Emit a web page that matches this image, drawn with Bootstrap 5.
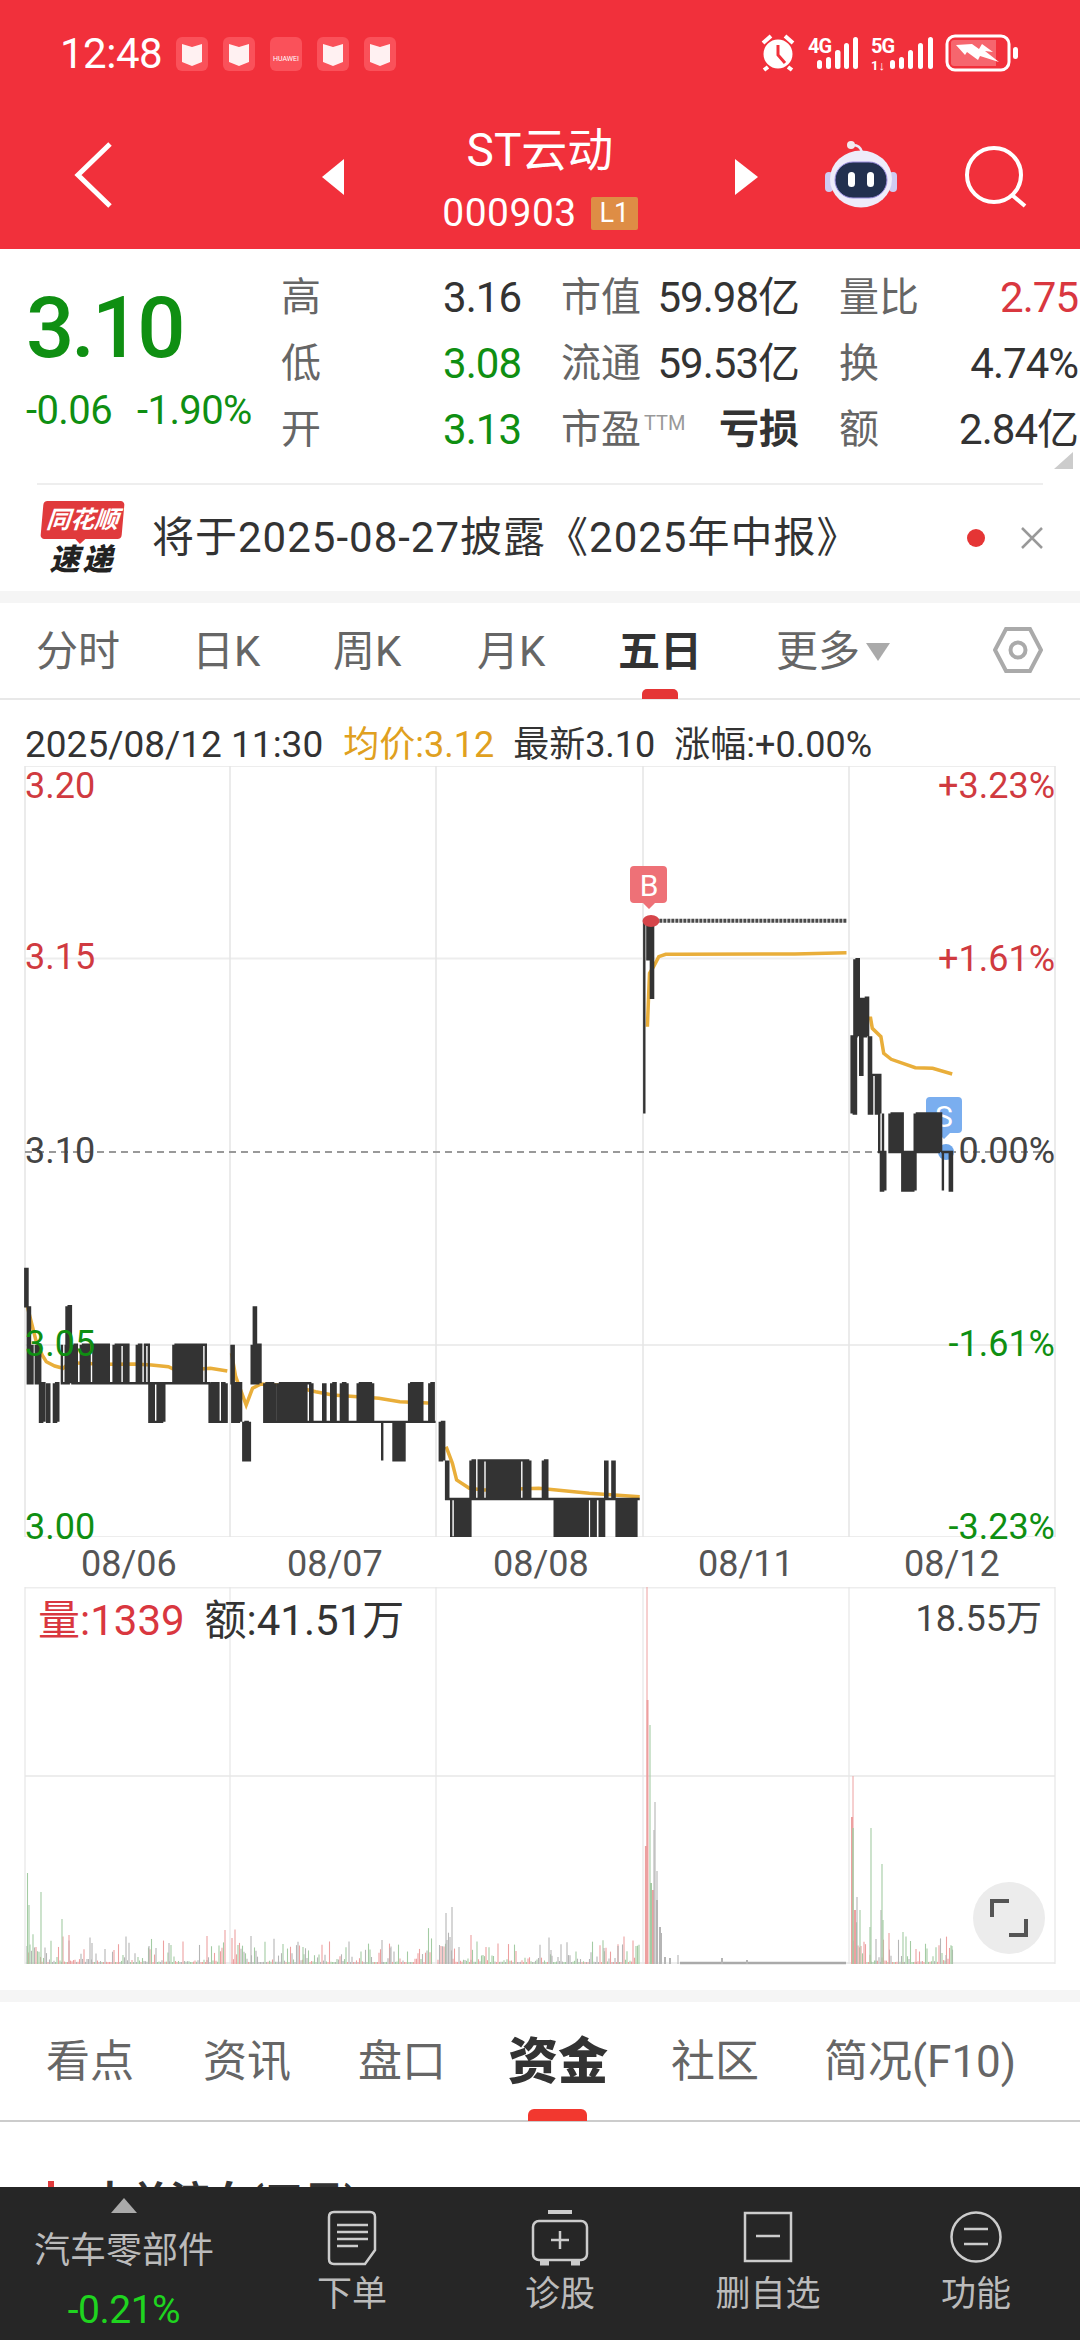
<!DOCTYPE html>
<html lang="zh">
<head>
  <meta charset="UTF-8">
  <title>ST云动</title>
  <link href="https://cdn.jsdelivr.net/npm/bootstrap@5.3.0/dist/css/bootstrap.min.css" rel="stylesheet">
  <style>
    html, body { width: 1080px; height: 2340px; overflow: hidden; }
    body { font-family: Roboto, "Noto Sans CJK SC", sans-serif; color: #333; background: #fff; position: relative; }
    svg { display: block; }

    .top-head { background: #f1303b; height: 249px; color: #fff; }
    .status-row { height: 108px; padding: 0 0 0 60px; }
    .clock { font-size: 42px; line-height: 1; width: 116px; letter-spacing: -.5px; }
    .noti { width: 32px; height: 34px; border-radius: 6px; background: #fa515a; margin-right: 15px; font-size: 7px; line-height: 1; }
    .nav-row { height: 141px; }
    .stock-name { font-size: 46px; line-height: 56px; margin-top: 14px; margin-bottom: 12px; }
    .stock-code { font-size: 39px; line-height: 46px; letter-spacing: .5px; }
    .lvl { background: #de8d45; font-size: 27px; line-height: 33px; width: 47px; text-align: center; border-radius: 2px; margin-left: 14px; }
    .name-box { width: 300px; position: absolute; left: 390px; top: 108px; }

    .quote { height: 234px; }
    .last-box { width: 281px; padding: 43px 0 0 26px; color: #0f8f12; }
    .last-price { font-size: 85px; line-height: 72px; letter-spacing: -3px; font-weight: 500; }
    .last-chg { font-size: 40px; line-height: 44px; margin-top: 25px; letter-spacing: -.6px; white-space: nowrap; }
    .last-chg span + span { margin-left: 25px; }
    .stat-grid { display: grid; grid-template-columns: 240px 238px 239px; column-gap: 40px; grid-auto-rows: 66px; padding-top: 16px; font-size: 40px; line-height: 66px; }
    .stat-grid > div { display: flex; justify-content: space-between; white-space: nowrap; }
    .num { font-size: 42px; letter-spacing: -1px; }
    .lbl { color: #666; }
    .val { color: #333; }
    .fall { color: #0f8f12; }
    .rise { color: #d9373f; }
    .ttm { font-size: 20px; line-height: 1; color: #999; vertical-align: 13px; margin-left: 3px; letter-spacing: 0; }
    .corner { width: 0; height: 0; border-left: 19px solid transparent; border-bottom: 17px solid #ccc; position: absolute; left: 1054px; top: 452px; }

    .notice { height: 108px; margin: 0 37px; border-top: 2px solid #eee; padding: 0 0 0 5px; }
    .logo-box { width: 110px; }
    .logo-red { width: 81px; height: 38px; margin-bottom: 6px; background: #e03a3c; color: #fff; font-size: 24px; line-height: 38px; font-weight: 700; font-style: italic; text-align: center; border-radius: 4px; transform: skewX(-5deg); position: relative; white-space: nowrap; }
    .logo-red::after { content: ""; position: absolute; left: 34px; top: 37px; border-left: 6px solid transparent; border-right: 6px solid transparent; border-top: 6px solid #e03a3c; }
    .logo-txt { font-size: 30px; line-height: 30px; font-weight: 900; font-style: italic; color: #222; width: 81px; text-align: center; letter-spacing: 3px; }
    .notice-txt { font-size: 42px; line-height: 50px; color: #333; letter-spacing: 1px; white-space: nowrap; flex-grow: 1; }
    .red-dot { width: 18px; height: 18px; border-radius: 50%; background: #e53535; margin-right: 36px; }

    .band { height: 12px; background: #f5f5f5; }
    .tabs-k { height: 97px; border-bottom: 2px solid #e8e8e8; display: grid; grid-template-columns: 156px 141px 144px 141px 158px 217px 1fr; padding-left: 36px; position: relative; font-size: 42px; line-height: 98px; color: #666; }
    .tab-on { color: #333; font-weight: 700; }
    .tab-bar-k { position: absolute; left: 642px; top: 86px; width: 36px; height: 10px; background: #e53535; border-radius: 5px 5px 0 0; }
    .mini-tri { display: inline-block; border-left: 12px solid transparent; border-right: 12px solid transparent; border-top: 18px solid #aaa; margin-left: 6px; vertical-align: 5px; }

    .info-line { height: 66px; padding: 24px 0 0 25px; font-size: 36px; line-height: 42px; color: #333; white-space: nowrap; }
    .info-line span { margin-right: 19px; }
    .info-line .info-date { font-size: 37px; margin-right: 20px; }
    .avg-txt { color: #e0a020; }

    .chart-box { position: relative; height: 771px; }
    .ax { position: absolute; font-size: 36px; line-height: 40px; white-space: nowrap; }
    .ax-l { left: 25px; color: #444; }
    .ax-r { right: 25px; color: #444; }
    .ax.rise { color: #d03a40; }
    .ax.fall { color: #0f8f12; }
    .time-row { height: 50px; position: relative; font-size: 36px; line-height: 40px; color: #555; }
    .time-row span { position: absolute; top: 7px; }

    .vol-box { position: relative; height: 378px; }
    .vol-txt { position: absolute; top: 10px; left: 38px; font-size: 42px; line-height: 48px; white-space: nowrap; }
    .vol-amt { margin-left: 20px; }
    .vol-max { position: absolute; top: 10px; right: 38px; font-size: 36px; line-height: 44px; color: #444; }
    .full-btn { position: absolute; left: 973px; top: 295px; width: 72px; height: 72px; border-radius: 50%; background: #ececec; }
    .gap-white { height: 25px; }

    .tabs-b { height: 120px; border-bottom: 2px solid #ccc; display: grid; grid-template-columns: 157px 155px 150px 163px 153px 1fr; padding-left: 46px; position: relative; font-size: 44px; line-height: 120px; color: #666; align-items: start; }
    .tab-big { color: #333; font-weight: 900; font-size: 50px; }
    .tab-bar-b { position: absolute; left: 528px; top: 107px; width: 59px; height: 12px; background: #f2382f; border-radius: 6px 6px 0 0; }
    .sect-head { padding: 55px 0 0 48px; font-size: 40px; line-height: 50px; font-weight: 700; color: #333; white-space: nowrap; }
    .sect-mark { display: inline-block; width: 6px; height: 40px; background: #e03a3c; margin-right: 36px; vertical-align: -6px; }
    .sect-q { display: inline-block; width: 24px; height: 24px; border: 3px solid #999; border-radius: 50%; margin-left: 38px; }

    .foot-bar { position: absolute; left: 0; top: 2187px; width: 1080px; height: 153px; background: #262626; color: #bbb; display: grid; grid-template-columns: 248px repeat(4, 208px); }
    .sector { position: relative; text-align: center; padding-top: 11px; }
    .sector-tri { width: 0; height: 0; margin: 0 auto; border-left: 13px solid transparent; border-right: 13px solid transparent; border-bottom: 15px solid #aaa; }
    .sector-name { font-size: 36px; line-height: 42px; margin-top: 17px; white-space: nowrap; }
    .sector-chg { font-size: 39px; line-height: 42px; color: #1fd41f; margin-top: 17px; letter-spacing: -.5px; }
    .foot-col { text-align: center; padding-top: 23px; font-size: 35px; line-height: 40px; }
    .foot-col svg { margin: 0 auto 9px; }
  </style>
</head>
<body>

<div class="top-head position-relative">
  <!-- status bar -->
  <div class="status-row d-flex align-items-center">
    <div class="clock">12:48</div>
    <div class="noti d-flex align-items-center justify-content-center"><svg width="20" height="24" viewBox="0 0 20 24"><path d="M0 2 L10 5 L20 2 V20 L10 24 L0 20 Z" fill="#fff" opacity=".92"/></svg></div>
    <div class="noti d-flex align-items-center justify-content-center"><svg width="20" height="24" viewBox="0 0 20 24"><path d="M0 2 L10 5 L20 2 V20 L10 24 L0 20 Z" fill="#fff" opacity=".92"/></svg></div>
    <div class="noti d-flex align-items-end justify-content-center pb-2">HUAWEI</div>
    <div class="noti d-flex align-items-center justify-content-center"><svg width="20" height="24" viewBox="0 0 20 24"><path d="M0 2 L10 5 L20 2 V20 L10 24 L0 20 Z" fill="#fff" opacity=".92"/></svg></div>
    <div class="noti d-flex align-items-center justify-content-center"><svg width="20" height="24" viewBox="0 0 20 24"><path d="M0 2 L10 5 L20 2 V20 L10 24 L0 20 Z" fill="#fff" opacity=".92"/></svg></div>
    <svg class="ms-auto" width="340" height="108" viewBox="740 0 340 108">
      <g stroke="#fff" fill="none">
        <circle cx="778" cy="54" r="13" fill="#fff" stroke-width="3"/>
        <path d="M763 43 L771 36 M793 43 L785 36 M768 67 L764 70 M788 67 L792 70" stroke-width="4"/>
        <path d="M778 45 V55 L785 63" stroke="#f1303b" stroke-width="3"/>
      </g>
      <g fill="#fff" font-family="Roboto, sans-serif" font-weight="700" font-size="20">
        <text x="808" y="53" letter-spacing="-1">4G</text>
        <text x="871" y="53" letter-spacing="-1">5G</text>
        <text x="871" y="70" font-size="13" font-weight="700">1↓</text>
        <rect x="817" y="60" width="5" height="9" rx="2.5"/><rect x="826" y="57" width="5" height="12" rx="2.5"/><rect x="835" y="50" width="5.500" height="19" rx="2.5"/><rect x="844" y="43" width="5" height="26" rx="2.500"/><rect x="853" y="37" width="5" height="32" rx="2.5"/>
        <rect x="890" y="60" width="5" height="9" rx="2.5"/><rect x="899" y="57" width="5" height="12" rx="2.5"/><rect x="908" y="50" width="5" height="19" rx="2.5"/><rect x="918" y="43" width="5" height="26" rx="2.5"/><rect x="928" y="37" width="5" height="32" rx="2.5"/>
      </g>
      <rect x="947" y="36" width="62" height="34" rx="8" fill="none" stroke="#fff" stroke-width="3"/>
      <path d="M954 40 H996 V66 H954 Q951 66 951 63 V43 Q951 40 954 40 Z" fill="#f6666e"/>
      <rect x="1013" y="47" width="5" height="12" rx="2.5" fill="#fff"/>
      <path d="M956 45 L972 44 L979 49 L982 44 L993 52 L985 51 L999 62 L980 56 L978 60 L967 52 L965 55 Z" fill="#fff"/>
    </svg>
  </div>

  <!-- nav row -->
  <div class="name-box text-center">
    <div class="stock-name">ST云动</div>
    <div class="d-flex justify-content-center align-items-center">
      <span class="stock-code">000903</span><span class="lvl">L1</span>
    </div>
  </div>
  <div class="nav-row">
    <svg width="1080" height="141" viewBox="0 108 1080 141">
      <path d="M110 144 L78 175 L110 206" fill="none" stroke="#fff" stroke-width="5"/>
      <path d="M344 159 V195 L322 177 Z" fill="#fff"/>
      <path d="M735 159 V195 L758 177 Z" fill="#fff"/>
      <!-- robot -->
      <path d="M853 145 Q860 145 862 152" fill="none" stroke="#eceaf9" stroke-width="2.500"/>
      <circle cx="851" cy="145" r="4" fill="#f3e9ef"/>
      <rect x="825" y="172" width="8" height="20" rx="4" fill="#cfcbf2"/>
      <rect x="889" y="172" width="8" height="20" rx="4" fill="#cfcbf2"/>
      <ellipse cx="861" cy="179" rx="31" ry="28.500" fill="#eeecfa"/>
      <rect x="835" y="162" width="52" height="36" rx="18" fill="#22304f" stroke="#9c8fe0" stroke-width="1"/>
      <rect x="848" y="172" width="7" height="15" rx="3.5" fill="#fff"/>
      <rect x="867" y="172" width="7" height="15" rx="3.5" fill="#fff"/>
      <!-- search -->
      <circle cx="994" cy="175" r="27" fill="none" stroke="#fff" stroke-width="4"/>
      <path d="M1012 195 L1025 206" stroke="#fff" stroke-width="4"/>
    </svg>
  </div>
</div>

<!-- quote -->
<div class="quote d-flex">
  <div class="last-box">
    <div class="last-price">3.10</div>
    <div class="last-chg"><span>-0.06</span><span>-1.90%</span></div>
  </div>
  <div class="stat-grid">
    <div><span class="lbl">高</span><span class="val num">3.16</span></div>
    <div><span class="lbl">市值</span><span class="val num">59.98亿</span></div>
    <div><span class="lbl">量比</span><span class="rise num">2.75</span></div>

    <div><span class="lbl">低</span><span class="fall num">3.08</span></div>
    <div><span class="lbl">流通</span><span class="val num">59.53亿</span></div>
    <div><span class="lbl">换</span><span class="val num">4.74%</span></div>

    <div><span class="lbl">开</span><span class="fall num">3.13</span></div>
    <div><span class="lbl">市盈<span class="ttm">TTM</span></span><span class="val fw-bold">亏损</span></div>
    <div><span class="lbl">额</span><span class="val num">2.84亿</span></div>
  </div>
</div>
<div class="corner"></div>

<!-- notice -->
<div class="notice d-flex align-items-center">
  <div class="logo-box">
    <div class="logo-red">同花顺</div>
    <div class="logo-txt">速递</div>
  </div>
  <div class="notice-txt">将于2025-08-27披露《2025年中报》</div>
  <div class="red-dot"></div>
  <svg width="22" height="22" viewBox="0 0 22 22"><path d="M1 1 L21 21 M21 1 L1 21" stroke="#999" stroke-width="2.5"/></svg>
</div>
<div class="band"></div>

<!-- period tabs -->
<div class="tabs-k">
  <div>分时</div><div>日K</div><div>周K</div><div>月K</div><div class="tab-on">五日</div>
  <div>更多<span class="mini-tri"></span></div>
  <div class="pt-4">
    <svg width="50" height="46" viewBox="0 0 50 46"><path d="M13 2 H37 L48 23 L37 44 H13 L2 23 Z" fill="none" stroke="#aaa" stroke-width="4"/><circle cx="25" cy="23" r="7.5" fill="none" stroke="#aaa" stroke-width="4"/></svg>
  </div>
  <div class="tab-bar-k"></div>
</div>

<!-- detail line -->
<div class="info-line"><span class="info-date">2025/08/12 11:30</span><span class="avg-txt">均价:3.12</span><span>最新3.10</span><span>涨幅:+0.00%</span></div>

<!-- price chart -->
<div class="chart-box">
  <svg id="priceSvg" width="1080" height="771" viewBox="0 766 1080 771"></svg>
  <span class="ax ax-l rise" id="l1">3.20</span>
  <span class="ax ax-l rise" id="l2">3.15</span>
  <span class="ax ax-l" id="l3">3.10</span>
  <span class="ax ax-l fall" id="l4">3.05</span>
  <span class="ax ax-l fall" id="l5">3.00</span>
  <span class="ax ax-r rise" id="r1">+3.23%</span>
  <span class="ax ax-r rise" id="r2">+1.61%</span>
  <span class="ax ax-r" id="r3">0.00%</span>
  <span class="ax ax-r fall" id="r4">-1.61%</span>
  <span class="ax ax-r fall" id="r5">-3.23%</span>
</div>
<div class="time-row">
  <span id="t1">08/06</span><span id="t2">08/07</span><span id="t3">08/08</span><span id="t4">08/11</span><span id="t5">08/12</span>
</div>

<!-- volume chart -->
<div class="vol-box">
  <svg id="volSvg" width="1080" height="378" viewBox="0 1587 1080 378"></svg>
  <div class="vol-txt"><span class="rise">量:1339</span><span class="vol-amt">额:41.51万</span></div>
  <div class="vol-max">18.55万</div>
  <div class="full-btn d-flex align-items-center justify-content-center">
    <svg width="40" height="40" viewBox="0 0 40 40"><path d="M3 19 V3 H20 M37 21 V37 H20" fill="none" stroke="#555" stroke-width="4"/></svg>
  </div>
</div>
<div class="gap-white"></div>
<div class="band"></div>

<!-- lower tabs -->
<div class="tabs-b">
  <div>看点</div><div>资讯</div><div>盘口</div><div class="tab-big">资金</div><div>社区</div><div>简况(F10)</div>
  <div class="tab-bar-b"></div>
</div>
<div class="sect-head"><span class="sect-mark"></span>大单流向(三日)<span class="sect-q"></span></div>

<!-- bottom bar -->
<div class="foot-bar">
  <div class="sector">
    <div class="sector-tri"></div>
    <div class="sector-name">汽车零部件</div>
    <div class="sector-chg">-0.21%</div>
  </div>
  <div class="foot-col">
    <svg width="50" height="56" viewBox="0 0 50 56" fill="none" stroke="#ccc" stroke-width="2.5"><path d="M7 2 H43 Q48 2 48 7 V40 L38 54 H7 Q2 54 2 49 V7 Q2 2 7 2 Z"/><path d="M10 15 H41 M10 22 H41 M10 29 H41 M10 36 H31"/></svg>
    <div>下单</div>
  </div>
  <div class="foot-col">
    <svg width="58" height="56" viewBox="0 0 58 56" fill="none" stroke="#ccc" stroke-width="2.5"><path d="M17 2 H41" stroke-width="4"/><rect x="2" y="11" width="54" height="39" rx="6"/><path d="M20 30 H38 M29 21 V39"/><path d="M9 53 H18 M40 53 H49" stroke-width="5"/></svg>
    <div>诊股</div>
  </div>
  <div class="foot-col">
    <svg width="50" height="56" viewBox="0 0 50 56" fill="none" stroke="#ccc" stroke-width="2.5"><rect x="2" y="3" width="46" height="48"/><path d="M13 26 H37"/></svg>
    <div>删自选</div>
  </div>
  <div class="foot-col">
    <svg width="54" height="56" viewBox="0 0 54 56" fill="none" stroke="#ccc" stroke-width="2.5"><circle cx="27" cy="27" r="24.5"/><path d="M15 19 H39 M15 34 H39"/></svg>
    <div>功能</div>
  </div>
</div>

<script>
  const NS = "http://www.w3.org/2000/svg";

  function add(svg, tag, attrs, text) {
    const el = document.createElementNS(NS, tag);
    for (const k in attrs) el.setAttribute(k, attrs[k]);
    if (text) el.textContent = text;
    svg.appendChild(el);
    return el;
  }

  let seed = 7;
  function rnd() {
    seed = (seed * 1103 + 12345) % 65536;
    return seed / 65536;
  }

  // price in cents to page y
  const py = p => 1152 - (p - 310) * 38.55;
  // the two zoom scales the x values were read at
  const xa = x => x / 2.376;
  const xb = x => 540 + x / 2.904;

  // irregular steps leave the thin white slits of the real line
  function zig(x1, x2, a, b) {
    let d = "M" + x1.toFixed(1) + " " + py(a);
    let top = true;
    let x = x1;
    while (x <= x2) {
      d += "L" + x.toFixed(1) + " " + py(top ? a : b);
      d += "L" + x.toFixed(1) + " " + py(top ? b : a);
      top = !top;
      x += rnd() < 0.1 ? 3.8 : 2.2;
    }
    return d;
  }

  const price = document.getElementById("priceSvg");

  // grid
  [766, 958.5, 1345, 1537].forEach(y => add(price, "line", {x1: 25, x2: 1055, y1: y, y2: y, stroke: "#ededed", "stroke-width": 2}));
  [25, 230, 436, 643, 849, 1055].forEach(x => add(price, "line", {x1: x, x2: x, y1: 766, y2: 1537, stroke: "#e4e4e4", "stroke-width": 1.5}));
  add(price, "line", {x1: 25, x2: 1055, y1: 1152, y2: 1152, stroke: "#999", "stroke-width": 2, "stroke-dasharray": "7 5"});

  // S marker sits behind the line
  add(price, "path", {d: "M930 1097 H958 Q962 1097 962 1101 V1129 Q962 1133 958 1133 H950 L944 1139 L938 1133 H930 Q926 1133 926 1129 V1101 Q926 1097 930 1097 Z", fill: "#7aaeef"});
  add(price, "text", {x: 944, y: 1127, "text-anchor": "middle", "font-size": 30, fill: "#fff", "font-family": "Roboto, sans-serif"}, "S");
  add(price, "circle", {cx: 946, cy: 1152, r: 8, fill: "#6ea6ea"});

  // average line
  const avg = [
    [[65,200],[75,250],[85,300],[100,345],[110,365],[130,378],[150,385],[165,368],[200,370],[240,373],[320,372],[360,375],[400,380],[420,392],[500,385],[540,393]],
    [[550,340],[560,410],[585,495],[600,445],[620,432],[660,435],[700,440],[750,455],[790,465],[850,470],[900,475],[950,485],[1030,490]],
    [[1060,620],[1075,670],[1085,720],[1115,745],[1150,750],[1280,745],[1340,752],[1400,760],[1520,770]]
  ];
  avg.forEach(s => add(price, "polyline", {
    points: s.map(p => xa(p[0]).toFixed(1) + "," + (1240 + p[1] / 3).toFixed(1)).join(" "),
    fill: "none", stroke: "#e9ae3a", "stroke-width": 3.5
  }));
  const avg2 = [
    [[312,560],[318,400],[330,380],[345,350],[365,343],[400,343],[740,342],[890,338]],
    [[918,570],[925,535],[960,535],[965,565],[990,590],[998,640],[1020,658],[1090,683],[1140,685],[1197,702]]
  ];
  avg2.forEach(s => add(price, "polyline", {
    points: s.map(p => xb(p[0]).toFixed(1) + "," + (840 + p[1] / 3).toFixed(1)).join(" "),
    fill: "none", stroke: "#e9ae3a", "stroke-width": 3.5
  }));

  // price line, blocks of x1, x2, high, low in cents
  const blocksA = [
    [60,66,307,306],[66,74,306,304],[72,82,305,304],[85,98,305,304],[95,108,304,303],[112,124,304,303],[128,147,304,303],
    [147,160,305,304],[158,172,306,304],[172,186,305,304],[192,262,305,304],[270,308,305,304],[325,357,305,304],
    [355,375,304,303],[380,395,304,303],[412,498,305,304],[498,540,304,303],
    [550,558,305,304],[552,578,304,303],[578,595,303,302],[598,620,305,304],[603,612,306,305],[628,655,304,303],
    [660,745,304,303],[768,778,304,303],[787,798,304,303],[810,828,304,303],[850,890,304,303],[908,916,303,302],
    [935,966,303,302],[972,1010,304,303],[1020,1035,304,303],
    [1045,1060,303,302],[1060,1070,302,301],[1072,1118,301,300],[1118,1262,302,301],[1290,1305,302,301],
    [1318,1400,301,300],[1405,1418,301,300],[1425,1438,301,300],[1438,1447,302,301],[1455,1463,302,301],[1465,1515,301,300]
  ];
  const blocksB = [
    [303,312,311,316],[312,322,316,315],[322,332,316,314],
    [905,918,311,313],[913,932,315,313],[930,942,314,312],[940,955,314,313],[955,965,313,311],[958,990,312,311],
    [985,997,311,310],[990,1012,310,309],[1015,1055,311,310],[1052,1092,310,309],[1088,1170,311,310],[1170,1180,310,309],[1190,1202,310,309]
  ];
  let d = "";
  blocksA.forEach(b => d += zig(xa(b[0]), xa(b[1]), b[2], b[3]));
  blocksB.forEach(b => d += zig(xb(b[0]), xb(b[1]), b[2], b[3]));
  // flat runs joining the blocks
  d += "M" + xa(172) + " " + py(304) + "H" + xa(500);
  d += "M" + xa(628) + " " + py(303) + "H" + xa(1035);
  d += "M" + xa(1060) + " " + py(301) + "H" + xa(1520);
  d += "M" + xb(1165) + " " + py(310) + "H" + xb(1200);
  add(price, "path", {d: d, fill: "none", stroke: "#333", "stroke-width": 2.4});
  add(price, "line", {x1: xb(335), x2: xb(890), y1: py(316), y2: py(316), stroke: "#4a4a4a", "stroke-width": 4, "stroke-dasharray": "3 1"});

  // B marker
  add(price, "ellipse", {cx: 651, cy: 921, rx: 8.5, ry: 6, fill: "#d6454a"});
  add(price, "path", {d: "M634 866 H663 Q667 866 667 870 V899 Q667 903 663 903 H655 L649 909 L643 903 H634 Q630 903 630 899 V870 Q630 866 634 866 Z", fill: "#ee7177"});
  add(price, "text", {x: 649, y: 896, "text-anchor": "middle", "font-size": 30, fill: "#fff", "font-family": "Roboto, sans-serif"}, "B");

  // axis labels
  const labelY = {l1: 786, l2: 957, l3: 1151, l4: 1344, l5: 1527, r1: 786, r2: 959, r3: 1151, r4: 1344, r5: 1527};
  for (const id in labelY) document.getElementById(id).style.top = (labelY[id] - 766 - 20) + "px";
  const timeX = {t1: 81, t2: 287, t3: 493, t4: 698, t5: 904};
  for (const id in timeX) document.getElementById(id).style.left = timeX[id] + "px";

  // volume
  const vol = document.getElementById("volSvg");
  [1587.5, 1776, 1963].forEach(y => add(vol, "line", {x1: 25, x2: 1055, y1: y, y2: y, stroke: "#ededed", "stroke-width": 2}));
  [25, 230, 436, 643, 849, 1055].forEach(x => add(vol, "line", {x1: x, x2: x, y1: 1587, y2: 1964, stroke: "#e6e6e6", "stroke-width": 1.2}));

  const colors = ["#eda0a0", "#a3cba3", "#b5b5b5"];
  function bar(x, top, c, w) {
    add(vol, "line", {x1: x, x2: x, y1: top, y2: 1964, stroke: colors[c], "stroke-width": w || 1.1});
  }
  [[27, 225], [232, 432], [438, 640], [852, 953]].forEach(day => {
    for (let x = day[0]; x < day[1]; x += 1.5) {
      const edge = Math.min(x - day[0], (day[1] - x) * 2);
      const r = rnd();
      const h = 2 + r * r * r * r * 26 + (edge < 14 ? rnd() * 22 : 0);
      bar(x, 1964 - h, Math.floor(rnd() * 3));
    }
  });

  // the tall bars read from the reference
  [[27.5,1873,1],[29,1905,1],[41,1892,1],[62,1919,1],[69,1935,0],[92,1943,2],[149,1946,2],[169,1943,2],[207,1936,0],[225,1930,0],
   [251,1936,2],[303,1947,1],[382,1940,2],[390,1948,2],
   [446,1913,2],[452,1907,2],[471,1935,0],[551,1950,2],[604,1948,2],[618,1946,2],
   [647,1587,0,1],[646,1846,0,2.2],[647.5,1700,0,2],[650,1725,1],[651,1883,1,2],[653,1890,0,2],[654,1830,2],[655,1802,2],[657,1871,2],[657,1900,2,2],[660,1927,2,2],[661,1933,2,2],[665,1957,2,2],[670,1958,2,2],[678,1955,2],
   [853,1776,0,1],[852,1817,0,2],[853,1828,1,1.5],[855,1910,0,2],[857,1897,2],[860,1910,1],[870,1927,1],[871,1828,1],[876,1939,2],[881,1910,2],[882,1864,1],[883,1920,1],[889,1933,0],[903,1932,1],[916,1949,0],[946,1955,2],[952,1946,1]
  ].forEach(b => bar(b[0], b[1], b[2], b[3]));
  // flat run of 08/11
  add(vol, "line", {x1: 680, x2: 846, y1: 1963, y2: 1963, stroke: "#aaa", "stroke-width": 2.5});
  [[722,1958],[747,1960]].forEach(b => bar(b[0], b[1], 2, 2));
</script>
<script src="https://cdn.jsdelivr.net/npm/bootstrap@5.3.0/dist/js/bootstrap.bundle.min.js"></script>
</body>
</html>
